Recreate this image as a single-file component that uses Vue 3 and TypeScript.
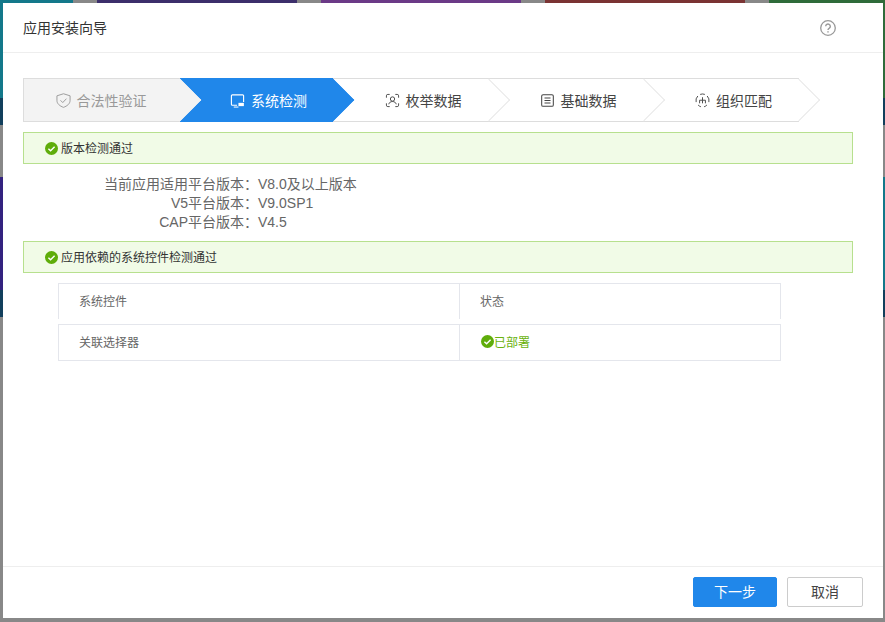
<template>
  <div class="page">
    <!-- what shows round the dialog: the dimmed app cards behind the mask -->
    <div class="backdrop">
      <div v-for="tile in tiles" :key="tile.id" class="tile" :class="tile.color">
        <div class="tile-foot"></div>
      </div>
    </div>

    <div class="dialog">
      <header class="dialog-header">
        <span class="dialog-title">应用安装向导</span>
        <svg class="help-icon" viewBox="0 0 16 16" fill="none" stroke="#999" stroke-width="1.3">
          <circle cx="8" cy="8" r="7.3" />
          <path d="M5.7 6.3a2.3 2.3 0 1 1 3.6 1.9c-.8.5-1.3.9-1.3 1.9" stroke-width="1.4" />
          <path d="M8 11.2v1.4" stroke-width="1.5" />
        </svg>
      </header>

      <div class="dialog-body">
        <div class="steps">
          <div
            v-for="step in steps"
            :key="step.id"
            class="step"
            :class="'step--' + step.state"
          >
            <svg class="step-icon" viewBox="0 0 16 16" fill="none" stroke="currentColor" stroke-width="1">
              <template v-if="step.id === 'legal'">
                <path d="M8 .8 15 3v5c0 3.400-3 5.900-7 7.300C4 13.900 1 11.400 1 8V3z" />
                <path d="m4.800 7.800 2.400 2.400 4-4.200" />
              </template>
              <template v-else-if="step.id === 'system'">
                <path d="M14.500 9.500V3a1 1 0 0 0-1-1h-11a1 1 0 0 0-1 1v9a1 1 0 0 0 1 1h5" stroke-width="1.200" />
                <path d="M9 10.500h5.800v3.500H9z" fill="currentColor" stroke="none" />
                <path d="M4 15h5" stroke-width="1.100" />
              </template>
              <template v-else-if="step.id === 'enum'">
                <path d="M1.500 5V3A1.500 1.500 0 0 1 3 1.500h2M11 1.500h2A1.500 1.500 0 0 1 14.500 3v2M14.500 11v2a1.500 1.500 0 0 1-1.500 1.500h-2M5 14.500H3A1.500 1.500 0 0 1 1.500 13v-2" />
                <circle cx="8" cy="6.400" r="2.300" />
                <path d="M4 12c.5-2 2-2.900 4-2.900s3.500.9 4 2.900" />
              </template>
              <template v-else-if="step.id === 'base'">
                <rect x="1.800" y="1.800" width="12.400" height="12.400" rx="1.500" stroke-width="1.100" />
                <path d="M4.800 5.300h6.400M4.800 8h6.400M4.800 10.700h6.400" stroke-width="1.100" />
              </template>
              <template v-else>
                <path d="M1.200 9.700A7 7 0 0 1 3 3.200M5.500 1.500a7 7 0 0 1 5 0M13 3.200a7 7 0 0 1 1.800 6.500M12.700 12.800a7 7 0 0 1-3 1.900M6.300 14.700a7 7 0 0 1-3-1.900" />
                <path d="M8 4.500v3.200M4.900 11V7.700h6.200V11M8 7.700V11" />
              </template>
            </svg>
            <span class="step-label">{{ step.label }}</span>
          </div>
        </div>

        <div class="alert">
          <svg class="check-icon" viewBox="0.5 0.5 13 13">
            <circle cx="7" cy="7" r="6.500" fill="#5fad0a" />
            <path d="m3.900 7.200 2.200 2.100 4-4" fill="none" stroke="#fff" stroke-width="1.400" />
          </svg>
          <span class="alert-text">版本检测通过</span>
        </div>

        <dl class="versions">
          <template v-for="row in versions" :key="row.label">
            <dt>{{ row.label }}：</dt>
            <dd>{{ row.value }}</dd>
          </template>
        </dl>

        <div class="alert">
          <svg class="check-icon" viewBox="0.5 0.5 13 13">
            <circle cx="7" cy="7" r="6.500" fill="#5fad0a" />
            <path d="m3.900 7.200 2.200 2.100 4-4" fill="none" stroke="#fff" stroke-width="1.400" />
          </svg>
          <span class="alert-text">应用依赖的系统控件检测通过</span>
        </div>

        <div class="table">
          <div class="table-row table-row--head">
            <div class="cell">系统控件</div>
            <div class="cell">状态</div>
          </div>
          <div v-for="plugin in plugins" :key="plugin.name" class="table-row">
            <div class="cell">{{ plugin.name }}</div>
            <div class="cell cell--ok">
              <svg class="check-icon" viewBox="0.5 0.5 13 13">
                <circle cx="7" cy="7" r="6.500" fill="#5fad0a" />
                <path d="m3.900 7.200 2.200 2.100 4-4" fill="none" stroke="#fff" stroke-width="1.400" />
              </svg>
              <span>{{ plugin.status }}</span>
            </div>
          </div>
        </div>
      </div>

      <footer class="dialog-footer">
        <button class="btn btn--primary">下一步</button>
        <button class="btn">取消</button>
      </footer>
    </div>
  </div>
</template>

<script setup lang="ts">
const steps = [
  { id: 'legal', label: '合法性验证', state: 'done' },
  { id: 'system', label: '系统检测', state: 'active' },
  { id: 'enum', label: '枚举数据', state: 'todo' },
  { id: 'base', label: '基础数据', state: 'todo' },
  { id: 'org', label: '组织匹配', state: 'todo' },
];

const versions = [
  { label: '当前应用适用平台版本', value: 'V8.0及以上版本' },
  { label: 'V5平台版本', value: 'V9.0SP1' },
  { label: 'CAP平台版本', value: 'V4.5' },
];

const plugins = [{ name: '关联选择器', status: '已部署' }];

const tileColors = ['teal', 'indigo', 'purple', 'maroon', 'green', 'violet', 'indigo', 'purple', 'maroon', 'teal'];
const tiles = tileColors.map((color, id) => ({ id, color }));
</script>

<style scoped>
.page {
  position: relative;
  width: 885px;
  height: 622px;
  overflow: hidden;
  background: #888;
  font-family: "Liberation Sans", "Noto Sans CJK SC", sans-serif;
  color: #333;
}
.backdrop {
  display: grid;
  grid-template-columns: repeat(5, 200px);
  grid-template-rows: 125px 140px;
  gap: 52px 24px;
  margin-left: -127px;
}
.tile {
  display: flex;
  flex-direction: column;
  justify-content: flex-end;
}
.tile-foot {
  height: 27px;
  background: #123f5c;
}
.teal { background: #13788a; }
.indigo { background: #3c2f6b; }
.purple { background: #6b3a87; }
.maroon { background: #7a3333; }
.green { background: #2f6b3a; }
.violet { background: #33227f; }

.dialog {
  position: absolute;
  top: 3px;
  left: 3px;
  width: 880px;
  height: 615px;
  display: flex;
  flex-direction: column;
  background: #fff;
}
.dialog-header {
  flex: none;
  height: 50px;
  box-sizing: border-box;
  display: flex;
  align-items: center;
  justify-content: space-between;
  padding: 0 47px 0 20px;
  border-bottom: 1px solid #eee;
}
.dialog-title {
  padding-bottom: 2px;
  font-size: 14px;
  color: #333;
}
.help-icon {
  width: 16px;
  height: 16px;
}
.dialog-body {
  flex: 1;
  padding: 25px 30px 0 20px;
}

.steps {
  display: flex;
  height: 44px;
  margin-bottom: 10px;
}
.step {
  position: relative;
  flex: none;
  box-sizing: border-box;
  width: 155px;
  height: 44px;
  display: flex;
  align-items: center;
  justify-content: center;
  padding-left: 23px;
  background: #fff;
  border-top: 1px solid #ddd;
  border-bottom: 1px solid #ddd;
  color: #444;
  font-size: 14px;
}
.step::after {
  content: "";
  position: absolute;
  top: 6px;
  right: -15px;
  width: 30px;
  height: 30px;
  box-sizing: border-box;
  background: #fff;
  border-top: 1px solid #e8e8e8;
  border-right: 1px solid #e8e8e8;
  transform: rotate(45deg);
}
.step:nth-child(1) { width: 157px; z-index: 5; }
.step:nth-child(2) { width: 153px; z-index: 4; padding-left: 24px; }
.step:nth-child(3) { width: 156px; z-index: 3; padding-left: 24px; }
.step:nth-child(4) { z-index: 2; }
.step:nth-child(5) { z-index: 1; padding-left: 24px; }
.step--done {
  padding: 0 2px 0 0;
  background: #f3f3f3;
  border-left: 1px solid #ddd;
  color: #999;
}
.step--done::after {
  background: #f3f3f3;
  border-color: #f3f3f3;
}
.step--active {
  background: #2087ea;
  border-color: #2087ea;
  color: #fff;
}
.step--active::after {
  background: #2087ea;
  border-color: #2087ea;
}
.step-icon {
  width: 15px;
  height: 15px;
  margin-right: 6px;
  flex: none;
}
.step-label {
  position: relative;
  z-index: 1;
}

.alert {
  box-sizing: border-box;
  height: 32px;
  display: flex;
  align-items: center;
  gap: 3px;
  padding-left: 21px;
  background: #f1fbe7;
  border: 1px solid #b7e08e;
  font-size: 12px;
  color: #333;
}
.alert-text {
  padding-bottom: 2px;
}
.check-icon {
  width: 13px;
  height: 13px;
  flex: none;
}

.versions {
  display: grid;
  grid-template-columns: 235px 1fr;
  grid-auto-rows: 19px;
  margin: 11px 0 9px;
  font-size: 14px;
  line-height: 19px;
  color: #666;
}
.versions dt {
  text-align: right;
}
.versions dd {
  margin: 0;
}

.table {
  width: 723px;
  margin: 10px 0 0 35px;
  font-size: 12px;
  color: #666;
}
.table-row {
  box-sizing: border-box;
  display: grid;
  grid-template-columns: 400px 1fr;
  height: 37px;
  border: 1px solid #e4e6ec;
}
.table-row--head {
  height: 36px;
  margin-bottom: 5px;
  border-bottom: none;
}
.cell {
  display: flex;
  align-items: center;
  padding: 0 0 2px 20px;
}
.cell + .cell {
  border-left: 1px solid #e4e6ec;
}
.cell--ok {
  color: #6bb20f;
}
.cell--ok .check-icon {
  margin-left: 1px;
}

.dialog-footer {
  flex: none;
  height: 52px;
  box-sizing: border-box;
  display: flex;
  justify-content: flex-end;
  gap: 10px;
  padding: 10px 20px 0 0;
  border-top: 1px solid #eee;
}
.btn {
  box-sizing: border-box;
  width: 76px;
  height: 30px;
  padding: 0 0 2px;
  background: #fff;
  border: 1px solid #ccc;
  border-radius: 2px;
  font-family: inherit;
  font-size: 14px;
  color: #444;
}
.btn--primary {
  width: 84px;
  background: #2087ea;
  border-color: #2087ea;
  color: #fff;
}
</style>
